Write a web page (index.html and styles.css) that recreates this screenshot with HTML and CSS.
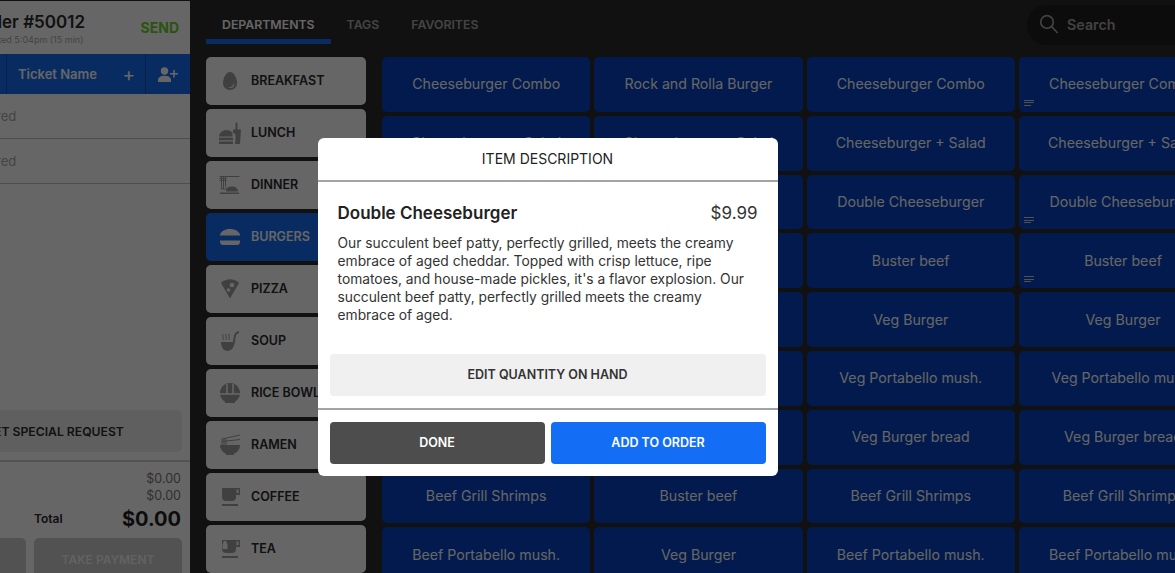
FILE: index.html
```html
<!DOCTYPE html>
<html lang="en">
<head>
  <meta charset="UTF-8">
  <title>Item Description</title>
  <meta name="viewport" content="width=device-width, initial-scale=1.0">
  <link rel="stylesheet" href="styles.css">
</head>
<body>
  <div class="app">
    <aside class="ticket">
      <div class="ticket-inner">
        <div class="ticket-head">
          <div>
            <div class="order-no">Order #50012</div>
            <div class="order-time">Created 5:04pm (15 min)</div>
          </div>
          <div class="send">SEND</div>
        </div>
        <div class="ticket-bar">
          <div class="bar-cell bar-first"></div>
          <div class="bar-cell bar-name"><span>Ticket Name</span><span class="bar-plus">+</span></div>
          <div class="bar-cell bar-user">
            <svg width="20" height="15" viewBox="0 0 20 15"><circle cx="6.500" cy="4" r="3.700"/><path d="M0 15v-2c0-2.800 3-4.300 6.500-4.300S13 10.200 13 13v2z"/><path d="M15.200 3h1.600v3H20v1.600h-3.200v3h-1.600v-3H12V6h3.200z"/></svg>
          </div>
        </div>
        <div class="ticket-row">Nothing ordered</div>
        <div class="ticket-row">Nothing ordered</div>
        <div class="ticket-space"></div>
        <div class="special-wrap"><div class="special">SET SPECIAL REQUEST</div></div>
        <div class="totals">
          <div class="amount">$0.00</div>
          <div class="amount">$0.00</div>
          <div class="total-row"><span class="total-label">Total</span><span class="total-value">$0.00</span></div>
        </div>
        <div class="ticket-actions">
          <div class="action action-left"></div>
          <div class="action action-pay">TAKE PAYMENT</div>
        </div>
      </div>
    </aside>

    <main class="menu">
      <div class="menu-head">
        <div class="tab tab-active">DEPARTMENTS</div>
        <div class="tab">TAGS</div>
        <div class="tab">FAVORITES</div>
        <div class="search">
          <svg width="20" height="20" viewBox="0 0 20 20" fill="none" stroke="currentColor" stroke-width="1.7"><circle cx="8" cy="8" r="6.3"/><path d="M12.6 12.6l6 6.4"/></svg>
          <span>Search</span>
        </div>
      </div>
      <div class="menu-body">
        <div class="departments">
          <div class="dept">
            <svg class="dept-icon" viewBox="0 0 24 24"><path d="M12 3c4 0 7 6 7 11 0 4-3 7-7 7s-7-3-7-7C5 9 8 3 12 3z"/><path class="cut" d="M16 13c0 3-2 5.500-6 5.500 1.500 1.300 7.500 1 6-5.500z"/></svg>
            BREAKFAST
          </div>
          <div class="dept">
            <svg class="dept-icon" viewBox="0 0 24 24"><path d="M1 15.500C1 12 4.500 9 8.500 9c2.500 0 4.700 1 6 3v3.500z"/><rect x="1" y="16.700" width="14" height="2.500"/><rect x="1" y="20.500" width="14" height="2.500"/><path d="M15 8.500h2.500V1.500h2v7H23l-1 14.500h-5l.5-4V13.500l-2.500-2z"/></svg>
            LUNCH
          </div>
          <div class="dept">
            <svg class="dept-icon" viewBox="0 0 24 24"><path d="M8 18.500c0-3 2.500-5 6-5s6 2 6 5z"/><rect x="2" y="19.500" width="19" height="1.500"/><path class="thin" d="M3.500 3v13M5.500 3v13M7.500 3v10M1.500 3.500h20M1.500 5.500h7M1.500 7.500h7M7.500 13.500l3 3M3.500 16h5"/></svg>
            DINNER
          </div>
          <div class="dept dept-active">
            <svg class="dept-icon" viewBox="0 0 24 24"><path d="M2 10.500C2 6.500 7 4 12 4s10 2.500 10 6.500z"/><path class="thin-wave" d="M2 13c2-1.500 3-1.500 5 0s3 1.500 5 0 3-1.500 5 0 3 1.500 5 0"/><path d="M2 15.500h20V17c0 2-1.500 3-3 3H5c-1.500 0-3-1-3-3z"/></svg>
            BURGERS
          </div>
          <div class="dept">
            <svg class="dept-icon" viewBox="0 0 24 24"><path d="M3 6c5-5 13-5 18 0l-9 15.500z"/><circle class="cut" cx="14" cy="8" r="2.300"/><circle class="cut" cx="10.500" cy="13" r="1.800"/></svg>
            PIZZA
          </div>
          <div class="dept">
            <svg class="dept-icon" viewBox="0 0 24 24"><path d="M3 13h13.500c0 5-3 9-7 9s-6.500-4-6.500-9z"/><path class="thick" d="M15.500 14c2-4-.5-10 5.500-11"/><path class="thin" d="M5 5c-1 2 1 3 0 6M8 5c-1 2 1 3 0 6M11 5c-1 2 1 3 0 6"/></svg>
            SOUP
          </div>
          <div class="dept">
            <svg class="dept-icon" viewBox="0 0 24 24"><path d="M12 2a10 10 0 0 1 5 18.700V22H7v-1.300A10 10 0 0 1 12 2z"/><path class="cut-line" d="M2 13h20M9 3v10M15 3v10"/></svg>
            RICE BOWL
          </div>
          <div class="dept">
            <svg class="dept-icon" viewBox="0 0 24 24"><path d="M2 12h20c0 4-3 8-6 8.500V22H8v-1.500c-3-.5-6-4.500-6-8.500z"/><path class="thin" d="M4 6v6M6 6v6M8 6v6M4 6l18-4M4 8.500l18-2"/></svg>
            RAMEN
          </div>
          <div class="dept">
            <svg class="dept-icon" viewBox="0 0 24 24"><path d="M4 3h18v7h-4v2c0 3-2 4-4 4H8c-2 0-4-1-4-4z"/><rect class="cut" x="18.500" y="4.500" width="2" height="3.500"/><rect x="4" y="19" width="16" height="2"/></svg>
            COFFEE
          </div>
          <div class="dept">
            <svg class="dept-icon" viewBox="0 0 24 24"><path d="M4 3h18v7h-4v2c0 3-2 4-4 4H8c-2 0-4-1-4-4z"/><rect class="cut" x="18.500" y="4.500" width="2" height="3.500"/><path class="cut" d="M5.500 4h3v1.500l1 2V12h-5V7.500l1-2z"/><rect x="4" y="19" width="16" height="2"/></svg>
            TEA
          </div>
        </div>

        <div class="items">
          <div class="item">Cheeseburger Combo</div>
          <div class="item">Rock and Rolla Burger</div>
          <div class="item">Cheeseburger Combo</div>
          <div class="item has-note">Cheeseburger Combo<span class="note"></span></div>

          <div class="item">Cheeseburger + Salad</div>
          <div class="item">Cheeseburger + Salad</div>
          <div class="item">Cheeseburger + Salad</div>
          <div class="item">Cheeseburger + Salad</div>

          <div class="item">Double Cheeseburger</div>
          <div class="item">Double Cheeseburger</div>
          <div class="item">Double Cheeseburger</div>
          <div class="item has-note">Double Cheeseburger<span class="note"></span></div>

          <div class="item">Buster beef</div>
          <div class="item">Buster beef</div>
          <div class="item">Buster beef</div>
          <div class="item has-note">Buster beef<span class="note"></span></div>

          <div class="item">Veg Burger</div>
          <div class="item">Veg Burger</div>
          <div class="item">Veg Burger</div>
          <div class="item">Veg Burger</div>

          <div class="item">Veg Portabello mush.</div>
          <div class="item">Veg Portabello mush.</div>
          <div class="item">Veg Portabello mush.</div>
          <div class="item">Veg Portabello mush.</div>

          <div class="item">Veg Burger bread</div>
          <div class="item">Veg Burger bread</div>
          <div class="item">Veg Burger bread</div>
          <div class="item">Veg Burger bread</div>

          <div class="item">Beef Grill Shrimps</div>
          <div class="item">Buster beef</div>
          <div class="item">Beef Grill Shrimps</div>
          <div class="item">Beef Grill Shrimps</div>

          <div class="item">Beef Portabello mush.</div>
          <div class="item">Veg Burger</div>
          <div class="item">Beef Portabello mush.</div>
          <div class="item">Beef Portabello mush.</div>
        </div>
      </div>
    </main>
  </div>

  <div class="overlay">
    <div class="modal">
      <div class="modal-title">ITEM DESCRIPTION</div>
      <div class="modal-body">
        <div class="modal-name-row">
          <span class="modal-name">Double Cheeseburger</span>
          <span class="modal-price">$9.99</span>
        </div>
        <p class="modal-desc">Our succulent beef patty, perfectly grilled, meets the creamy embrace of aged cheddar. Topped with crisp lettuce, ripe tomatoes, and house-made pickles, it's a flavor explosion. Our succulent beef patty, perfectly grilled meets the creamy embrace of aged.</p>
      </div>
      <div class="modal-edit"><div class="btn btn-light">EDIT QUANTITY ON HAND</div></div>
      <div class="modal-actions">
        <div class="btn btn-dark">DONE</div>
        <div class="btn btn-blue">ADD TO ORDER</div>
      </div>
    </div>
  </div>
</body>
</html>
```

FILE: styles.css
```css
body { margin: 0; height: 573px; overflow: hidden; background: #2b2b2b; font-family: "Inter", "Liberation Sans", sans-serif; }

.app { display: flex; height: 573px; overflow: hidden; }

/* ticket column, scrolled partly off the left edge */
.ticket { width: 190px; flex-shrink: 0; overflow: hidden; margin-top: 1px; background: #fff; }
.ticket-inner { width: 278px; margin-left: -88px; }
.ticket-head { height: 53px; box-sizing: border-box; padding: 11px 11px 0 60px; display: flex; justify-content: space-between; }
.order-no { font-size: 17px; font-weight: 600; line-height: 20px; color: #2b2b2b; }
.order-time { font-size: 9px; line-height: 13px; margin: 1px 0 0 6px; color: #aaa; }
.send { font-size: 14px; font-weight: 700; margin-top: 7px; color: #6cd02a; }
.ticket-bar { height: 40px; display: flex; background: #146ef5; color: #fff; }
.bar-cell { border-right: 1px solid #0f55bd; box-sizing: border-box; display: flex; align-items: center; }
.bar-first { width: 95px; }
.bar-name { width: 139px; padding: 0 10px 0 11px; justify-content: space-between; font-size: 13px; font-weight: 600; }
.bar-plus { font-size: 19px; font-weight: 400; }
.bar-user { flex: 1; border: 0; justify-content: center; }
.bar-user svg { fill: #fff; }
.ticket-row { height: 45px; box-sizing: border-box; border-bottom: 1px solid #c4c4c4; padding-left: 4px; display: flex; align-items: center; font-size: 13px; color: #aaa; }
.ticket-space { height: 226px; }
.special-wrap { padding: 0 8px 8px 16px; border-bottom: 2px solid #cfcfcf; }
.special { height: 42px; border-radius: 5px; background: #eee; display: flex; align-items: center; justify-content: center; font-size: 12.2px; font-weight: 600; color: #2b2b2b; }
.totals { padding: 8px 9px 0 122px; text-align: right; }
.amount { font-size: 12.5px; line-height: 17px; color: #777; }
.total-row { display: flex; justify-content: space-between; align-items: center; height: 29px; }
.total-label { font-size: 12px; font-weight: 600; color: #2b2b2b; }
.total-value { font-size: 20px; font-weight: 700; color: #1f1f1f; }
.ticket-actions { display: flex; gap: 8px; padding: 5px 8px 0 16px; }
.action { height: 42px; border-radius: 5px; background: #ccc; display: flex; align-items: center; justify-content: center; font-size: 12px; font-weight: 600; color: #f4f4f4; }
.action-left { width: 98px; }
.action-pay { width: 148px; }

/* right side */
.menu { flex: 1; min-width: 0; overflow: hidden; padding-left: 16px; }
.menu-head { height: 57px; display: flex; }
.tab { height: 44px; box-sizing: border-box; padding: 16px 16px 0; font-size: 12.3px; line-height: 18px; font-weight: 600; color: #aaa; }
.tab-active { color: #fff; border-bottom: 5px solid #146ef5; }
.search { margin-left: auto; margin-top: 5px; width: 148px; height: 40px; box-sizing: border-box; padding: 0 0 2px 12px; border-radius: 20px 0 0 20px; background: #1e1e1e; color: #a5a5a5; display: flex; align-items: center; gap: 8px; font-size: 14.3px; font-weight: 600; }

.menu-body { display: flex; gap: 16px; }
.departments { width: 160px; flex-shrink: 0; display: flex; flex-direction: column; gap: 4px; }
.dept { height: 48px; box-sizing: border-box; padding: 0 0 1px 12px; border-radius: 5px; background: #fff; color: #2b2b2b; display: flex; align-items: center; gap: 9px; font-size: 12.5px; line-height: 14px; font-weight: 600; white-space: nowrap; }
.dept-icon { width: 24px; height: 24px; flex-shrink: 0; fill: #a0a0a0; margin-top: 1px; }
.dept-icon .cut { fill: #fff; }
.dept-icon .thin { fill: none; stroke: #a0a0a0; stroke-width: 1; }
.dept-icon .thick { fill: none; stroke: #a0a0a0; stroke-width: 2; }
.dept-icon .cut-line { fill: none; stroke: #fff; stroke-width: 1.500; }
.dept-active { background: #146ef5; color: #fff; }
.dept-active .dept-icon { fill: #fff; }
.dept-icon .thin-wave { fill: none; stroke: #146ef5; stroke-width: 1.200; }

.items { display: grid; grid-template-columns: repeat(4, 208.3px); grid-auto-rows: 54.8px; gap: 4px; }
.item { position: relative; border-radius: 5px; box-sizing: border-box; padding-bottom: 1px; background: #0543c0; color: #fff; display: flex; align-items: center; justify-content: center; font-size: 14.2px; white-space: nowrap; }
.note { position: absolute; left: 5px; bottom: 6px; width: 10px; height: 6px; background: linear-gradient(#ccc 1px, transparent 1px) 0 0 / 10px 2.500px no-repeat, linear-gradient(#ccc 1px, transparent 1px) 0 2.500px / 10px 2.500px no-repeat, linear-gradient(#ccc 1px, transparent 1px) 0 5px / 7px 1px no-repeat; }

/* modal */
.overlay { position: fixed; top: 0; left: 0; right: 0; bottom: 0; box-sizing: border-box; padding: 138px 80px 0 0; display: flex; justify-content: center; align-items: flex-start; background: rgba(0, 0, 0, 0.6); }
.modal { width: 460px; height: 338px; border-radius: 6px; background: #fff; color: #222; display: flex; flex-direction: column; }
.modal-title { height: 44px; box-sizing: border-box; border-bottom: 2px solid #a3a3a3; text-align: center; font-size: 14px; line-height: 42px; }
.modal-body { height: 172px; box-sizing: border-box; padding: 20px 20px 0; }
.modal-name-row { display: flex; justify-content: space-between; align-items: center; height: 22px; }
.modal-name { font-size: 17px; font-weight: 600; }
.modal-price { font-size: 17px; color: #333; }
.modal-desc { margin: 10px 0 0; font-size: 13.8px; line-height: 18px; color: #333; }
.modal-edit { height: 56px; box-sizing: border-box; padding: 0 12px; border-bottom: 2px solid #a3a3a3; }
.modal-actions { display: flex; gap: 6px; padding: 12px 12px 0; }
.btn { flex: 1; height: 42px; box-sizing: border-box; padding-bottom: 2px; border-radius: 4px; display: flex; align-items: center; justify-content: center; font-size: 12.5px; font-weight: 600; }
.btn-light { background: #f0f0f0; color: #333; }
.btn-dark { background: #4d4d4d; color: #fff; }
.btn-blue { background: #146ef5; color: #fff; }
```
